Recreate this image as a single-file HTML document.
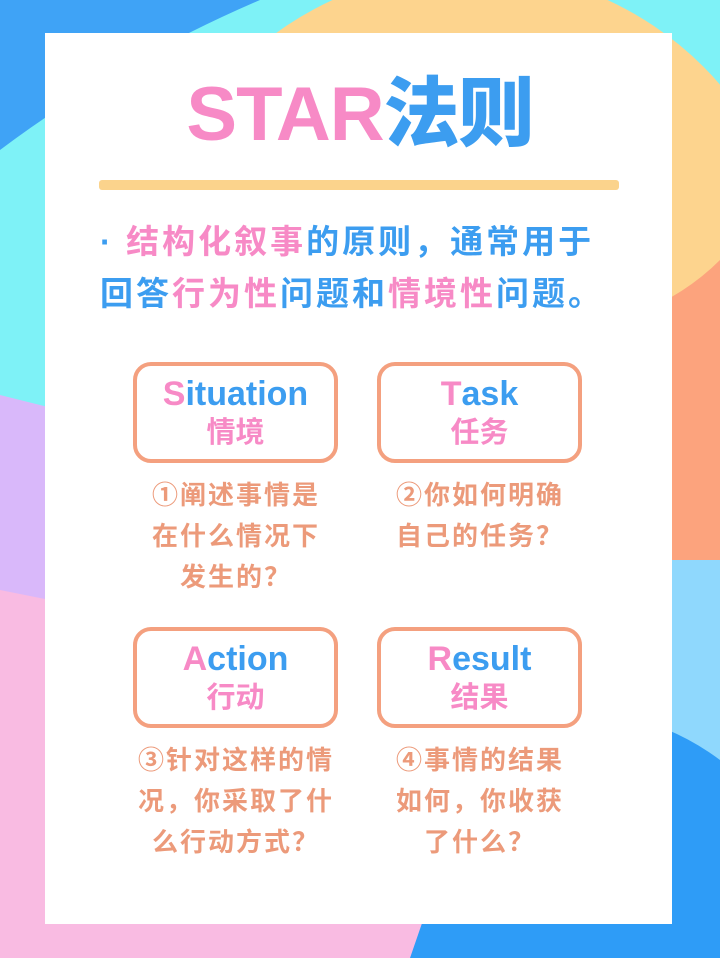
<!DOCTYPE html>
<html><head><meta charset="utf-8"><style>
*{margin:0;padding:0;box-sizing:border-box}
html,body{width:720px;height:958px;overflow:hidden}
body{position:relative;font-family:"Liberation Sans","Noto Sans CJK SC",sans-serif;background:#7ef2f7}
svg.bg{position:absolute;left:0;top:0}
.card{position:absolute;left:45px;top:33px;width:627px;height:891px;background:#fff}
.abs{position:absolute}
.title{left:0;width:720px;top:70px;text-align:center;font-size:76px;font-weight:900;line-height:90px;letter-spacing:-1px}
.pk{color:#f78ac6}.bl{color:#3c9df0}
.bar{left:99px;top:180px;width:520px;height:10px;background:#fbd38c;border-radius:3px}
.body{left:100px;top:216px;font-size:33px;font-weight:bold;line-height:52px;width:560px;letter-spacing:3px;white-space:nowrap}
.box{width:205px;height:101px;border:4px solid #f4a07f;border-radius:18px;text-align:center;padding-top:8px}
.box .en{font-size:34px;font-weight:bold;line-height:40px;color:#3c9df0}
.box .en b{color:#f78ac6}
.box .zh{font-size:29px;font-weight:bold;line-height:38px;color:#f78ac6}
.desc{left:0;width:250px;text-align:center;font-size:26px;font-weight:bold;line-height:41px;color:#ec9a7a;letter-spacing:2px;white-space:nowrap}
</style></head><body>
<svg class="bg" width="720" height="958" viewBox="0 0 720 958">
<rect width="720" height="958" fill="#7ef2f7"/>
<path d="M0 0H260Q120 60 0 150Z" fill="#3fa3f6"/>
<circle cx="470" cy="300" r="330" fill="#fdd48e"/>
<path d="M720 0V40Q680 10 640 0Z" fill="#7ef2f7"/>
<path d="M0 395L100 420V958H0Z" fill="#d9b8fa"/>
<path d="M0 590L100 610V958H0Z" fill="#f9bbe2"/>
<path d="M720 260V560H620V320Q680 300 720 260Z" fill="#fca37d"/>
<path d="M620 560H720V958H620Z" fill="#8fd8fd"/>
<circle cx="570" cy="960" r="250" fill="#2e9cf7"/>
<path d="M100 900H430L410 958H100Z" fill="#f9bbe2"/>
</svg>
<div class="card"></div>
<div class="abs title"><span class="pk">STAR</span><span class="bl">法则</span></div>
<div class="abs bar"></div>
<div class="abs body"><span class="bl">· </span><span class="pk">结构化叙事</span><span class="bl">的原则，通常用于</span><br><span class="bl">回答</span><span class="pk">行为性</span><span class="bl">问题和</span><span class="pk">情境性</span><span class="bl">问题。</span></div>

<div class="abs box" style="left:133px;top:362px"><div class="en"><b>S</b>ituation</div><div class="zh">情境</div></div>
<div class="abs box" style="left:377px;top:362px"><div class="en"><b>T</b>ask</div><div class="zh">任务</div></div>
<div class="abs desc" style="left:111px;top:475px">①阐述事情是<br>在什么情况下<br>发生的？</div>
<div class="abs desc" style="left:355px;top:475px">②你如何明确<br>自己的任务？</div>

<div class="abs box" style="left:133px;top:627px"><div class="en"><b>A</b>ction</div><div class="zh">行动</div></div>
<div class="abs box" style="left:377px;top:627px"><div class="en"><b>R</b>esult</div><div class="zh">结果</div></div>
<div class="abs desc" style="left:111px;top:740px">③针对这样的情<br>况，你采取了什<br>么行动方式？</div>
<div class="abs desc" style="left:355px;top:740px">④事情的结果<br>如何，你收获<br>了什么？</div>
</body></html>
